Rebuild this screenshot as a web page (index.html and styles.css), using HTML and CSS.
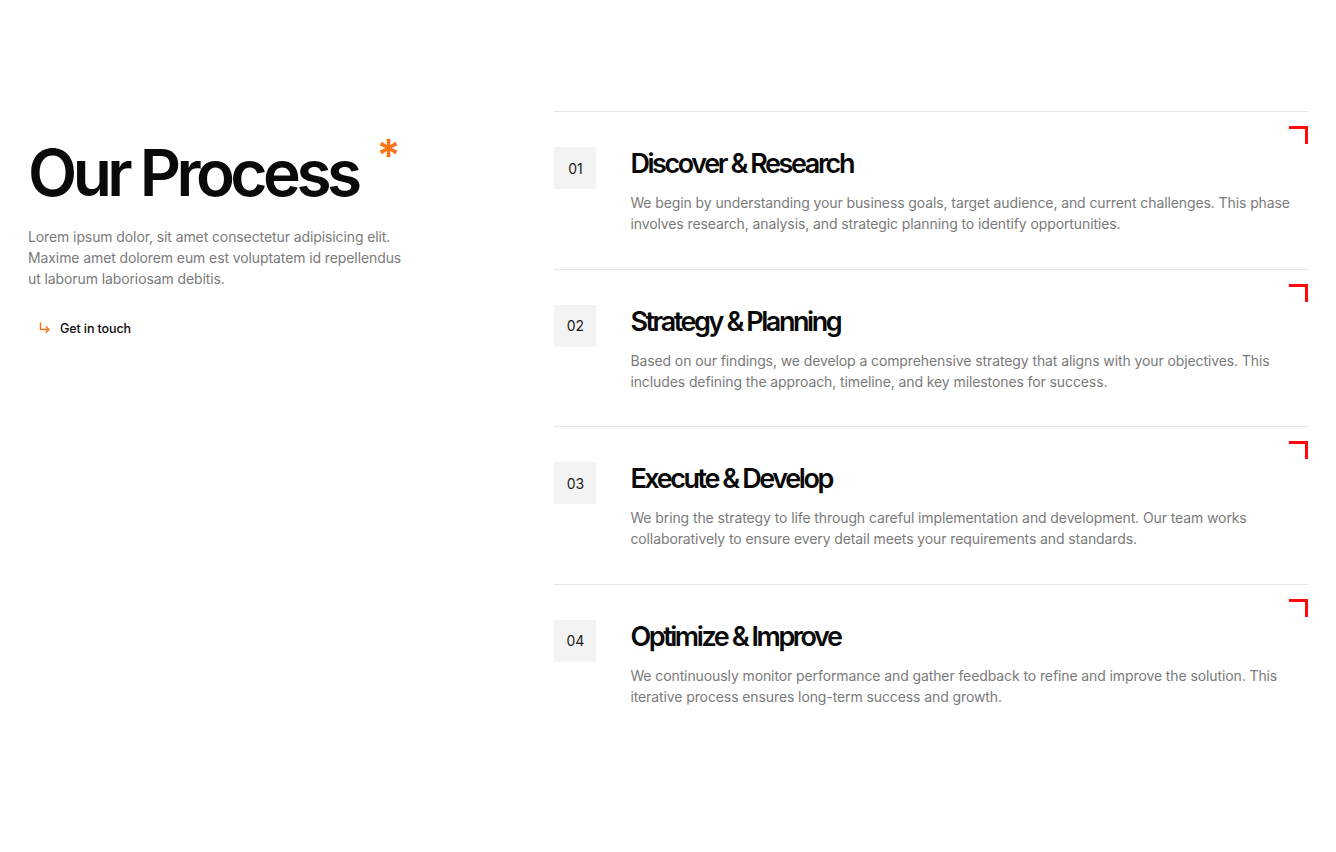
FILE: index.html
```html
<!DOCTYPE html>
<html lang="en">
<head>
<meta charset="utf-8">
<title>Our Process</title>
<link rel="stylesheet" href="styles.css">
</head>
<body>
<section class="process">
  <div class="intro">
    <h1 class="intro-title">Our Process <span class="star">*</span></h1>
    <p class="intro-text">Lorem ipsum dolor, sit amet consectetur adipisicing elit. Maxime amet dolorem eum est voluptatem id repellendus ut laborum laboriosam debitis.</p>
    <a class="cta" href="#">
      <svg class="cta-icon" viewBox="0 0 12 12" width="12" height="12" aria-hidden="true"><path d="M1.5 1v6.5h8.5M7.2 4.8l2.8 2.7-2.8 2.7" fill="none" stroke="#f97316" stroke-width="1.4" stroke-linecap="round" stroke-linejoin="round"/></svg>
      <span>Get in touch</span>
    </a>
  </div>
  <div class="steps">
    <div class="step">
      <span class="corner"></span>
      <div class="num">01</div>
      <div class="step-body">
        <h2 class="step-title">Discover &amp; Research</h2>
        <p class="step-text">We begin by understanding your business goals, target audience, and current challenges. This phase involves research, analysis, and strategic planning to identify opportunities.</p>
      </div>
    </div>
    <div class="step">
      <span class="corner"></span>
      <div class="num">02</div>
      <div class="step-body">
        <h2 class="step-title">Strategy &amp; Planning</h2>
        <p class="step-text">Based on our findings, we develop a comprehensive strategy that aligns with your objectives. This includes defining the approach, timeline, and key milestones for success.</p>
      </div>
    </div>
    <div class="step">
      <span class="corner"></span>
      <div class="num">03</div>
      <div class="step-body">
        <h2 class="step-title">Execute &amp; Develop</h2>
        <p class="step-text">We bring the strategy to life through careful implementation and development. Our team works collaboratively to ensure every detail meets your requirements and standards.</p>
      </div>
    </div>
    <div class="step">
      <span class="corner"></span>
      <div class="num">04</div>
      <div class="step-body">
        <h2 class="step-title">Optimize &amp; Improve</h2>
        <p class="step-text">We continuously monitor performance and gather feedback to refine and improve the solution. This iterative process ensures long-term success and growth.</p>
      </div>
    </div>
  </div>
</section>
</body>
</html>
```
FILE: styles.css
```css
* { box-sizing: border-box; }
html, body { margin: 0; padding: 0; background: #fff; }
body {
  font-family: Inter, "Noto Sans", sans-serif;
  color: #0a0a0a;
}
.process {
  display: grid;
  grid-template-columns: 2fr 3fr;
  gap: 24px;
  padding: 111px 28px 0;
}
.intro { padding-top: 24px; }
.intro-title {
  display: flex;
  align-items: flex-start;
  margin: 0;
  font-size: 64px;
  font-weight: 600;
  line-height: 1.2;
  letter-spacing: -0.071em;
}
.star {
  color: #f97316;
  font-size: 44px;
  line-height: 1;
  margin-left: 19px;
  margin-top: -2px;
  letter-spacing: 0;
}
.intro-text {
  margin: 14px 0 0;
  max-width: 380px;
  font-size: 14px;
  line-height: 21px;
  letter-spacing: -0.1px;
  color: #7a7a7a;
}
.cta {
  display: inline-flex;
  align-items: center;
  gap: 9px;
  margin-top: 32px;
  padding-left: 11px;
  font-size: 12.5px;
  font-weight: 500;
  letter-spacing: -0.1px;
  color: #0a0a0a;
  text-decoration: none;
}
.cta-icon { display: block; }
.steps { display: flex; flex-direction: column; }
.step {
  position: relative;
  display: flex;
  align-items: flex-start;
  gap: 34px;
  border-top: 1px solid #e5e5e5;
  padding: 35px 0 0;
  height: 157.5px;
}
.corner {
  position: absolute;
  top: 14px;
  right: 0;
  width: 19px;
  height: 18px;
  border-top: 3px solid #ff0a0a;
  border-right: 3px solid #ff0a0a;
}
.num {
  flex: none;
  width: 42px;
  height: 42px;
  display: flex;
  align-items: center;
  justify-content: center;
  background: #f3f3f3;
  font-size: 14px;
  color: #1a1a1a;
}
.step-body { flex: 1; }
.step-title {
  margin: 0;
  font-size: 27px;
  font-weight: 600;
  line-height: 34px;
  letter-spacing: -0.09em;
}
.step-text {
  margin: 11px 0 0;
  font-size: 14px;
  line-height: 21px;
  letter-spacing: -0.1px;
  color: #7a7a7a;
}
```
